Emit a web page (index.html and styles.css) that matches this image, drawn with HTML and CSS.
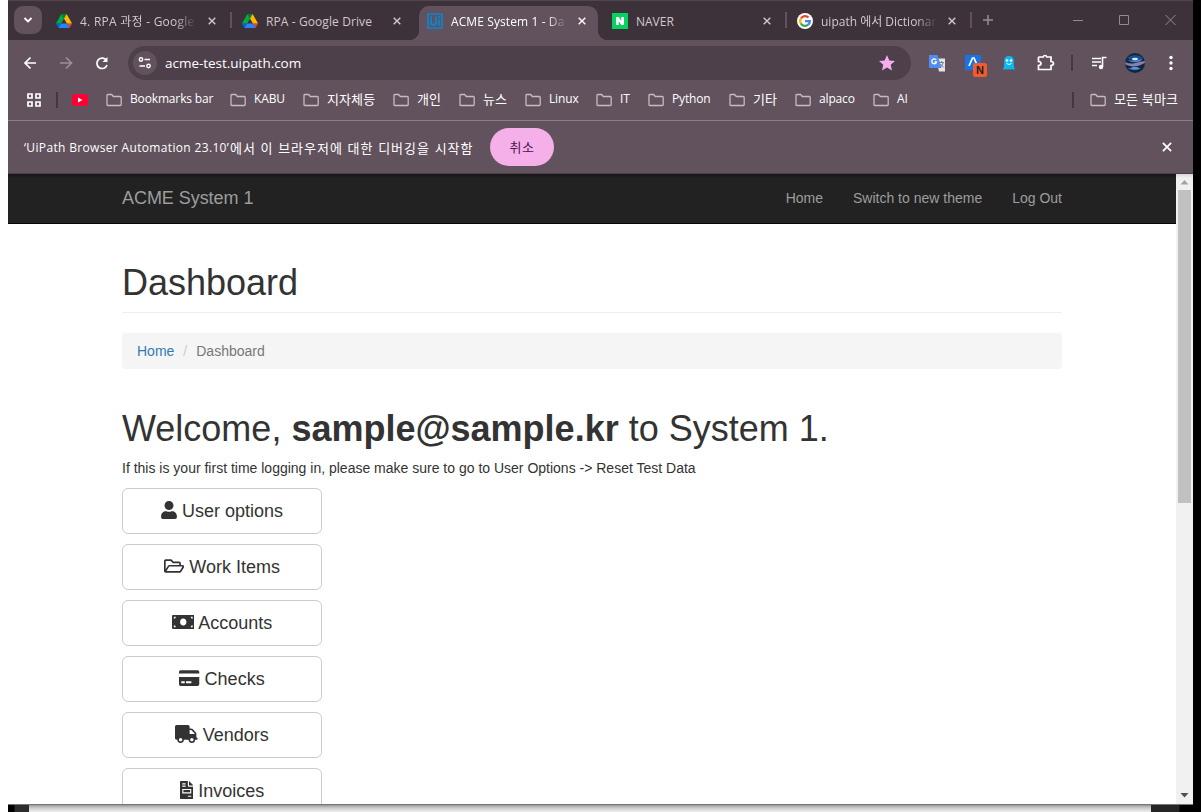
FILE: index.html
```html
<!DOCTYPE html>
<html lang="ko">
<head>
<meta charset="utf-8">
<title>ACME System 1 - Dashboard</title>
<link rel="stylesheet" href="styles.css">
</head>
<body>
<svg class="defs" width="0" height="0">
  <symbol id="folder" viewBox="0 0 16 14"><path d="M1 2.2Q1 1.500 1.700 1.500H5.700L7.300 3.500H14.300Q15.200 3.500 15.200 4.400V11.600Q15.200 12.500 14.300 12.500H1.800Q1 12.500 1 11.600Z" fill="none" stroke="#c5bcc2" stroke-width="1.300"/></symbol>
  <symbol id="drive" viewBox="0 0 87.3 78"><path d="M6.600 66.900l3.800 6.600c.8 1.400 1.900 2.500 3.300 3.300L27.500 53H0c0 1.600.4 3.100 1.200 4.500z" fill="#0066da"/><path d="M43.700 25L29.900 1.200c-1.300.8-2.500 1.900-3.300 3.300L1.200 48.500C.4 49.900 0 51.400 0 53h27.500z" fill="#00ac47"/><path d="M73.500 76.800c1.400-.8 2.500-1.900 3.300-3.300l9.300-16c.8-1.400 1.200-3 1.200-4.500H59.800l5.900 11.500z" fill="#ea4335"/><path d="M43.700 25L57.400 1.200C56.100.4 54.500 0 52.900 0H34.400c-1.600 0-3.200.5-4.500 1.200z" fill="#00832d"/><path d="M59.800 53H27.500L13.700 76.800c1.400.8 2.900 1.200 4.500 1.200h50.800c1.600 0 3.200-.5 4.500-1.200z" fill="#2684fc"/><path d="M73.400 26.500L60.700 4.500c-.8-1.400-1.900-2.500-3.300-3.300L43.700 25l16.100 28h27.500c0-1.600-.4-3.100-1.200-4.500z" fill="#ffba00"/></symbol>
  <symbol id="x" viewBox="0 0 8 8"><path d="M.7.7l6.600 6.600M7.300.7L.7 7.300" stroke="currentColor" stroke-width="1.400"/></symbol>
</svg>
<div class="desktop">
<div class="window">
  <div class="tabs">
    <div class="tab-search"><svg width="10" height="8" viewBox="0 0 10 8"><path d="M1.500 2L5 5.500 8.500 2" fill="none" stroke="#fff" stroke-width="1.800"/></svg></div>
    <div class="tab t1"><svg class="fav" viewBox="0 0 16 16"><use href="#drive" y="1" width="16" height="14"/></svg><span class="tab-text s1">4. RPA 과정 - Google</span><svg class="close"><use href="#x"/></svg></div>
    <div class="tab t2"><svg class="fav" viewBox="0 0 16 16"><use href="#drive" y="1" width="16" height="14"/></svg><span class="tab-text s2">RPA - Google Drive</span><svg class="close"><use href="#x"/></svg></div>
    <div class="tab t3 active"><svg class="fav" viewBox="0 0 16 16"><path d="M1 1h14v14H1z" fill="none" stroke="#0c84cf" stroke-width="1.700"/><path d="M4 3.500v5.500q0 3 2.500 3T9 9V3.500M12 6.500V12.500M12 3v2" fill="none" stroke="#0c84cf" stroke-width="1.900"/></svg><span class="tab-text s3">ACME System 1 - Da</span><svg class="close"><use href="#x"/></svg></div>
    <div class="tab t4"><svg class="fav" viewBox="0 0 16 16"><path d="M0 0h16v16H0z" fill="#04d360"/><path d="M4 12V4h2.700l2.600 4V4H12v8H9.300L6.700 8v4z" fill="#fff"/></svg><span class="tab-text s4">NAVER</span><svg class="close"><use href="#x"/></svg></div>
    <div class="tab t5"><svg class="fav" viewBox="0 0 16 16"><circle cx="8" cy="8" r="8" fill="#fff"/><g fill="none" stroke-width="2.300"><path d="M4 5.500A4.800 4.800 0 0 1 11.500 4.500" stroke="#ea4335"/><path d="M4 5.300a5 5 0 0 0 0 5.400" stroke="#fbbc05"/><path d="M3.900 10.500a4.800 4.800 0 0 0 7.300 1.200" stroke="#34a853"/><path d="M8 8.200h4.800q0 2.200-1.600 3.500" stroke="#4285f4"/></g></svg><span class="tab-text s5">uipath 에서 Dictionar</span><svg class="close"><use href="#x"/></svg></div>
    <svg class="newtab" viewBox="0 0 12 12"><path d="M6 1v10M1 6h10" stroke="#998f96" stroke-width="1.500"/></svg>
    <svg class="winctl" width="104" height="12" viewBox="0 0 104 12" fill="none" stroke="#938990"><path d="M0 6.500h10"/><path d="M46.500 1.500h9v9h-9zM92.500 1l10 10M102.500 1l-10 10"/></svg>
  </div>
  <div class="toolbar">
    <svg class="nav-icons" width="100" height="40" viewBox="0 0 100 40" fill="none" stroke="#fff" stroke-width="1.700"><path d="M28 23H17.500M22.500 17.500L17 23l5.500 5.500"/><path d="M52 23h11M58 17.500l5.500 5.500-5.500 5.500" stroke="#9b8f98"/><path d="M98.500 20.500A5.200 5.200 0 1 0 99 25" /><path d="M99.500 17v5h-5z" fill="#fff" stroke="none"/></svg>
    <div class="omnibox">
      <div class="site"><svg width="14" height="14" viewBox="0 0 14 14" fill="none" stroke="#fff" stroke-width="1.400"><circle cx="3" cy="3.500" r="1.700"/><path d="M6.500 3.500H12M1.500 10H7"/><circle cx="10.500" cy="10" r="1.700"/></svg></div>
      <span class="url">acme-test.uipath.com</span>
      <svg class="star" viewBox="0 0 16 16"><path d="M8 0l2.300 5.500 5.700.500-4.300 3.800L13 15.500 8 12.400 3 15.500l1.300-5.700L0 6l5.700-.500z" fill="#f5aeeb"/></svg>
    </div>
    <svg class="ext" width="270" height="40" viewBox="0 0 270 40">
      <path d="M24 18.500h9v13h-6z" fill="#e4e4e4"/><path d="M17 15h8.500l4 13H18q-1 0-1-1z" fill="#4e8df5"/><path d="M24.200 20a2.400 2.400 0 1 0 .3 2H22.500" fill="none" stroke="#fff" stroke-width="1.300"/><path d="M27 22.500h5M29.500 21v1.500M31 23q-1 3-3 4.500M28.300 24l3.500 3.500" stroke="#607d8b" stroke-width=".9" fill="none"/>
      <path d="M53 15h16v15H53z" fill="#1674e8"/><path d="M57 26l3.500-8h1.500l4 9" stroke="#fff" stroke-width="1.700" fill="none"/><rect x="61" y="23" width="14" height="14" rx="2.500" fill="#f45b2b"/><text x="68" y="34" class="badge">N</text>
      <path d="M91 29q1.200-1 1.200-5v-3q0-5 4.800-5t4.800 5v3q0 4 1.200 5-2 1-3.300 0-1.300 1-2.700 0-1.400 1-2.700 0-1.300 1-3.300 0z" fill="#0ab8f5"/><circle cx="95" cy="20.500" r="1.300" fill="#fff"/><circle cx="99" cy="20.500" r="1.300" fill="#fff"/><path d="M94.500 23.500q2.500 2 5 0" stroke="#fff" fill="none"/>
      <path d="M127 17h4.200q.3-1.500 1.800-1.500t1.800 1.500H139v4.500q2.500.100 2.500 2t-2.500 2V29.500H126.500V25.500q2.500-.2 2.500-2t-2.500-2V17.500z" fill="none" stroke="#fff" stroke-width="1.700"/>
      <path d="M160 15v16" stroke="#46383f" stroke-width="2"/>
      <path d="M180 18.500h9M180 22h9M180 25.500h5M190.500 27v-9.500h4" fill="none" stroke="#fff" stroke-width="1.600"/><circle cx="189" cy="27" r="2.200" fill="#fff"/>
      <circle cx="223" cy="23" r="10" fill="#14263f"/><path d="M215.500 17.500q7.500-4.500 15 0l-4 4-8-1z" fill="#1d4f8f"/><path d="M213.200 22q5 2.500 10 1t9.500-2l.2 2q-8 4-12 3.500t-7.500-2z" fill="#8a7db0"/><path d="M215 20q8 2 16-1.500l-3 3q-7 2-13-1.500z" fill="#3e8bd0"/><ellipse cx="223" cy="19" rx="3" ry="1.300" fill="#d5edff"/><path d="M216 28.500q7-2.500 13 0-6 3.500-13 0z" fill="#2c7bc0"/><path d="M220 28h6" stroke="#7fc2f0"/>
      <g fill="#fff"><circle cx="259" cy="17.500" r="1.700"/><circle cx="259" cy="23" r="1.700"/><circle cx="259" cy="28.500" r="1.700"/></g>
    </svg>
  </div>
  <div class="bookmarks">
    <svg class="apps" viewBox="0 0 14 14" fill="none" stroke="#fff" stroke-width="1.700"><path d="M1 1h4v4H1zM9 1h4v4H9zM1 9h4v4H1zM9 9h4v4H9z"/></svg>
    <i class="bar"></i>
    <svg class="yt" viewBox="0 0 16 12"><rect width="16" height="12" rx="3" fill="#f03"/><path d="M6 3.500v5L10.500 6z" fill="#fff"/></svg>
    <div class="bm b1"><svg><use href="#folder"/></svg><span>Bookmarks bar</span></div>
    <div class="bm b2"><svg><use href="#folder"/></svg><span>KABU</span></div>
    <div class="bm ko b3"><svg><use href="#folder"/></svg><span>지자체등</span></div>
    <div class="bm ko b4"><svg><use href="#folder"/></svg><span>개인</span></div>
    <div class="bm ko b5"><svg><use href="#folder"/></svg><span>뉴스</span></div>
    <div class="bm b6"><svg><use href="#folder"/></svg><span>Linux</span></div>
    <div class="bm b7"><svg><use href="#folder"/></svg><span>IT</span></div>
    <div class="bm b8"><svg><use href="#folder"/></svg><span>Python</span></div>
    <div class="bm ko b9"><svg><use href="#folder"/></svg><span>기타</span></div>
    <div class="bm b10"><svg><use href="#folder"/></svg><span>alpaco</span></div>
    <div class="bm b11"><svg><use href="#folder"/></svg><span>AI</span></div>
    <i class="bar all-bar"></i>
    <div class="bm ko all"><svg><use href="#folder"/></svg><span>모든 북마크</span></div>
  </div>
  <div class="infobar"><span class="info-en">‘UiPath Browser Automation 23.10’</span><span class="info-ko">에서 이 브라우저에 대한 디버깅을 시작함</span><button class="cancel">취소</button><svg class="info-x"><use href="#x"/></svg></div>
  <div class="viewport">
    <div class="page">
      <nav class="navbar"><a class="brand">ACME System 1</a><div class="links"><a>Home</a><a>Switch to new theme</a><a>Log Out</a></div></nav>
      <main class="container">
        <h1 class="title">Dashboard</h1>
        <div class="crumbs"><a>Home</a><i>/</i><span>Dashboard</span></div>
        <h1 class="welcome">Welcome, <b>sample@sample.kr</b> to System 1.</h1>
        <p class="hint">If this is your first time logging in, please make sure to go to User Options -&gt; Reset Test Data</p>
        <div class="buttons">
          <button class="btn"><svg width="16" height="18" viewBox="0 0 448 512"><path d="M224 256c70.700 0 128-57.300 128-128S294.700 0 224 0 96 57.300 96 128s57.300 128 128 128zm89.600 32h-16.700c-22.200 10.200-46.900 16-72.900 16s-50.600-5.800-72.900-16h-16.700C60.200 288 0 348.200 0 422.400V464c0 26.500 21.500 48 48 48h352c26.500 0 48-21.500 48-48v-41.600c0-74.200-60.200-134.400-134.400-134.400z"/></svg>User options</button>
          <button class="btn"><svg width="20.250" height="18" viewBox="0 0 576 512"><path fill-rule="evenodd" d="M527.900 224H480v-48c0-26.500-21.500-48-48-48H272l-64-64H48C21.500 64 0 85.500 0 112v288c0 26.500 21.500 48 48 48h400c16.500 0 31.900-8.500 40.700-22.600l79.900-128c20-31.900-3-73.400-40.700-73.400zM48 118c0-3.300 2.700-6 6-6h134.100l64 64H426c3.300 0 6 2.700 6 6v42H152c-16.800 0-32.400 8.800-41.100 23.200L48 351.400zm400 282H72l77.200-128H528z"/></svg>Work Items</button>
          <button class="btn cash"><svg width="22.500" height="18" viewBox="0 0 640 512"><path fill-rule="evenodd" d="M32 56h576q32 0 32 32v336q0 32-32 32H32q-32 0-32-32V88q0-32 32-32zM52 108v58q58 0 58-58zm478 0q0 58 58 58v-58zM52 346v58h58q0-58-58-58zm536 0q-58 0-58 58h58zM320 156c-54 0-90 43-90 100s36 100 90 100 90-43 90-100-36-100-90-100z"/></svg>Accounts</button>
          <button class="btn"><svg width="20.250" height="18" viewBox="0 0 576 512"><path fill-rule="evenodd" d="M0 128V80q0-48 48-48h480q48 0 48 48v48zM0 224h576v208q0 48-48 48H48q-48 0-48-48zM64 346v62h100v-62zm136 0v62h152v-62z"/></svg>Checks</button>
          <button class="btn"><svg width="22.500" height="18" viewBox="0 0 640 512"><path d="M624 352h-16V243.900c0-12.700-5.100-24.900-14.100-33.900L494 110.100c-9-9-21.200-14.100-33.900-14.100H416V48c0-26.500-21.500-48-48-48H48C21.500 0 0 21.500 0 48v320c0 26.500 21.500 48 48 48h16c0 53 43 96 96 96s96-43 96-96h128c0 53 43 96 96 96s96-43 96-96h48c8.800 0 16-7.200 16-16v-32c0-8.800-7.200-16-16-16zM160 464c-26.500 0-48-21.500-48-48s21.500-48 48-48 48 21.500 48 48-21.500 48-48 48zm320 0c-26.500 0-48-21.500-48-48s21.500-48 48-48 48 21.500 48 48-21.500 48-48 48zm80-208H416V144h44.100l99.900 99.900V256z"/></svg>Vendors</button>
          <button class="btn"><svg width="13.500" height="18" viewBox="0 0 384 512"><path fill-rule="evenodd" d="M24 0h200v136q0 24 24 24h136v328q0 24-24 24H24q-24 0-24-24V24Q0 0 24 0zM256 0l128 128H256zM64 64v32h96V64zm0 64v32h96v-32zm0 96v128h256V224zm32 32h192v64H96zm128 160v32h96v-32z"/></svg>Invoices</button>
        </div>
      </main>
    </div>
    <div class="scroll"><svg viewBox="0 0 17 16"><path d="M4.500 10.500h8L8.500 6z" fill="#a3a3a3"/></svg><div class="thumb"></div><svg class="down" viewBox="0 0 17 16"><path d="M4.500 6h8l-4 4.500z" fill="#505050"/></svg></div>
  </div>
</div>
<div class="behind"><i class="dark-left"></i><i class="dark-right"></i></div>
</div>
</body>
</html>
```
FILE: styles.css
```css
*{box-sizing:border-box}
body{margin:0;width:1201px;height:812px;overflow:hidden;background:#fff;font-family:"Liberation Sans",Arial,sans-serif;color:#333}
svg{flex:none;display:block}
.defs{position:absolute}
.desktop{margin-left:8px;width:1193px;height:812px;background:#000}
.window{width:1185px;height:804px;display:flex;flex-direction:column;background:#62525d;font-family:"Open Sans","Noto Sans CJK KR",sans-serif;font-size:12px;color:#fff}
.tabs{height:40px;flex:none;display:flex;background:#3e323a;border-top:1px solid #51464d}
.tab-search{width:28px;height:28px;margin:5px 6px 0;border-radius:9px;background:#62525d;display:flex;align-items:center;justify-content:center}
.tab{height:34px;margin-top:5px;display:flex;align-items:center;position:relative;color:#cfc8cc;padding-bottom:5px}
.t1{width:184px;padding-left:8px}
.t2{width:187px;padding-left:10px}
.t3{width:179px;padding-left:8px}
.t4{width:188px;padding-left:14px}
.t5{width:185px;padding-left:11px}
.t1::after,.t4::after,.t5::after{content:"";position:absolute;right:0;top:6px;width:2px;height:16px;background:#62525d}
.t4::after,.t5::after{right:-1px}
.fav{width:16px;height:16px;margin-right:8px}
.tab-text{width:116px;height:20px;line-height:20px;white-space:nowrap;margin-top:2px}
.s1,.s3,.s5{-webkit-mask-image:linear-gradient(90deg,#000 82%,transparent);mask-image:linear-gradient(90deg,#000 82%,transparent)}
.s1{letter-spacing:.25px}
.s2{width:127px;letter-spacing:.1px}
.s3{letter-spacing:.1px}
.s4{width:127px}
.close{width:8px;height:8px;margin-left:auto;margin-right:16px}
.t2 .close{margin-right:18px}
.t3 .close{margin-right:12px}
.t4 .close,.t5 .close{margin-right:15px}
.active{background:#62525d;border-radius:10px 10px 0 0;color:#fff}
.active::before,.active::after{content:"";position:absolute;bottom:0;width:10px;height:10px}
.active::before{left:-10px;background:radial-gradient(circle at 0 0,transparent 10px,#62525d 10.500px)}
.active::after{right:-10px;background:radial-gradient(circle at 100% 0,transparent 10px,#62525d 10.500px)}
.newtab{width:12px;height:12px;margin:13px 0 0 11px}
.winctl{margin:13px 0 0 79px}
.toolbar{height:40px;flex:none;display:flex}
.omnibox{width:783px;height:34px;margin:6px 0 0 20px;border-radius:17px;background:#4d404a;display:flex;align-items:center}
.site{width:24px;height:24px;margin-left:5px;border-radius:50%;background:#62525d;display:flex;align-items:center;justify-content:center}
.url{margin-left:8px;font-size:13.500px;letter-spacing:-.03px}
.star{width:16px;height:16px;margin-left:auto;margin-right:16px}
.ext{margin-left:1px}
.badge{font:bold 11px "Liberation Sans",sans-serif;fill:#222;text-anchor:middle}
.bookmarks{height:41px;flex:none;display:flex;align-items:center;border-bottom:1px solid #8b7c87;padding-left:19px}
.apps{width:14px;height:14px}
.bar{width:2px;height:16px;background:#43363e;margin:0 14px 0 15px}
.yt{width:16px;height:12px;margin-right:18px}
.bm{display:flex;align-items:center;margin-right:18px;white-space:nowrap;letter-spacing:-.15px}
.bm span{height:18px;line-height:16px}
.ko{font-family:"Noto Sans CJK KR",sans-serif;font-size:13px;letter-spacing:.1px}
.bm svg{width:16px;height:14px;margin-right:8px}
.b1{width:106px}.b2{width:55px}.b3{width:72px}.b4,.b5,.b9{width:48px}.b6{width:53px}.b7{width:34px}.b8{width:63px}.b10{width:60px}.b11{width:40px}
.all-bar{margin:0 16px 0 auto}
.all{width:88px;margin-right:15px}
.infobar{height:53px;flex:none;display:flex;align-items:center;padding-left:16px;white-space:nowrap;border-bottom:1px solid #4f414b}
.info-en{width:206px;flex:none;letter-spacing:.34px}
.info-ko{width:260px;font:13px "Noto Sans CJK KR",sans-serif;letter-spacing:1px}
.cancel{width:64px;height:38px;border:0;border-radius:19px;background:#f5b0ea;color:#4c1648;font:13px "Noto Sans CJK KR",sans-serif;letter-spacing:.5px;padding:0 0 2px}
.info-x{width:10px;height:10px;margin-left:auto;margin-right:21px}
.viewport{height:630px;flex:none;display:flex;background:#fff;color:#333;overflow:hidden}
.page{width:1168px;font:14px/20px "Liberation Sans",Arial,sans-serif}
.navbar{height:50px;background:linear-gradient(#151515,#222 4px);border-bottom:1px solid #080808;padding:0 114px 2px;display:flex;justify-content:space-between;align-items:center;color:#9d9d9d}
.brand{font-size:18px;letter-spacing:-.05px}
.links{display:flex;gap:30px}
.container{padding:0 114px}
h1{font-weight:500;font-size:36px;line-height:40px;margin:0}
.title{height:89px;padding-top:39px;border-bottom:1px solid #eee}
.crumbs{height:36px;margin-top:20px;padding:8px 15px;background:#f5f5f5;border-radius:4px;color:#777;display:flex}
.crumbs a{color:#337ab7}
.crumbs i{font-style:normal;color:#ccc;margin:0 9px}
.welcome{margin-top:40px}
.hint{margin:9px 0 10px}
.buttons{display:flex;flex-direction:column;gap:10px}
.btn{width:200px;height:46px;border:1px solid #ccc;border-radius:6px;background:#fff;color:#333;font:18px/24px "Liberation Sans",Arial,sans-serif;padding:0;display:flex;align-items:center;justify-content:center;gap:5px}
.btn svg{fill:#333;margin-top:-2px}
.cash{gap:4px}
.scroll{width:17px;background:linear-gradient(#d8d8d8,#f1f1f1 4px);display:flex;flex-direction:column}
.thumb{width:13px;height:313px;margin-left:2px;background:#c1c1c1}
.scroll .down{margin-top:auto;margin-bottom:1px}
.behind{width:1185px;height:8px;background:linear-gradient(#939393,#aaa 1px,#ccc 3px,#eee);display:flex;justify-content:space-between;border-top:1px solid #777}
.dark-left{width:21px;background:linear-gradient(90deg,#000 6px,#2d2d2d 7px)}
.dark-right{width:42px;background:linear-gradient(90deg,#252525 28px,#000 29px)}
```
